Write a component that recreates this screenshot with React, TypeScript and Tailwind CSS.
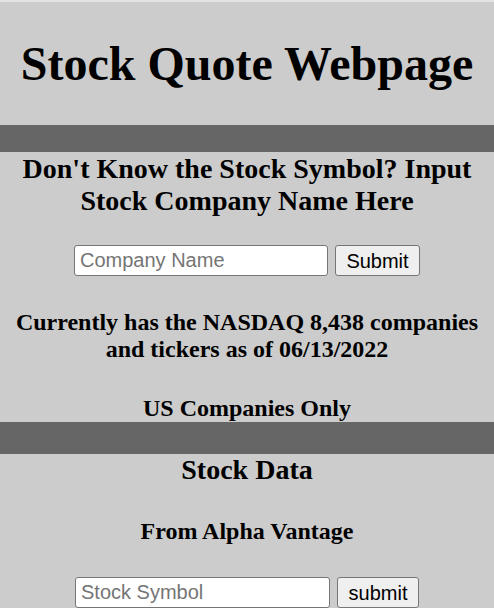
import React from "react";

const serif = { fontFamily: '"Liberation Serif", "Times New Roman", serif' };

function SearchRow({ placeholder, label, inputW, btnW }: { placeholder: string; label: string; inputW: string; btnW: string }) {
  return (
    <form
      onSubmit={(e) => e.preventDefault()}
      className="flex justify-center gap-[7px] font-['Liberation_Sans',Arial,sans-serif] text-[20px]"
    >
      <input
        placeholder={placeholder}
        className={`${inputW} h-[31px] rounded-[3px] border border-[#767676] bg-white px-[5px] text-black outline-none placeholder:text-[#757575]`}
      />
      <button
        type="submit"
        className={`${btnW} h-[31px] rounded-[3px] border border-[#767676] bg-[#efefef] text-black`}
      >
        {label}
      </button>
    </form>
  );
}

export default function App() {
  return (
    <div className="min-h-[608px] w-[494px] overflow-hidden bg-[#cccccc] text-black" style={serif}>
      <div className="h-[2px] bg-[#e4e4e4]" />
      <header className="flex h-[123px] items-center justify-center">
        <h1 className="text-[48px] font-bold leading-none">Stock Quote Webpage</h1>
      </header>
      <div className="h-[27px] bg-[#666666]" />

      <section className="text-center">
        <h2 className="pt-px text-[28px] font-bold leading-[32px]">
          Don't Know the Stock Symbol? Input
          <br />
          Stock Company Name Here
        </h2>
        <div className="mt-[28px]">
          <SearchRow placeholder="Company Name" label="Submit" inputW="w-[254px]" btnW="w-[85px]" />
        </div>
        <p className="mt-[33px] text-[24px] font-bold leading-[27px]">
          Currently has the NASDAQ 8,438 companies
          <br />
          and tickers as of 06/13/2022
        </p>
        <p className="mt-[31px] text-[24px] font-bold leading-[28px]">US Companies Only</p>
      </section>

      <div className="h-[32px] bg-[#666666]" />

      <section className="text-center">
        <h2 className="text-[28px] font-bold leading-[32px]">Stock Data</h2>
        <h3 className="mt-[32px] text-[24px] font-bold leading-[27px]">From Alpha Vantage</h3>
        <div className="mt-[32px]">
          <SearchRow placeholder="Stock Symbol" label="submit" inputW="w-[255px]" btnW="w-[82px]" />
        </div>
      </section>
    </div>
  );
}
